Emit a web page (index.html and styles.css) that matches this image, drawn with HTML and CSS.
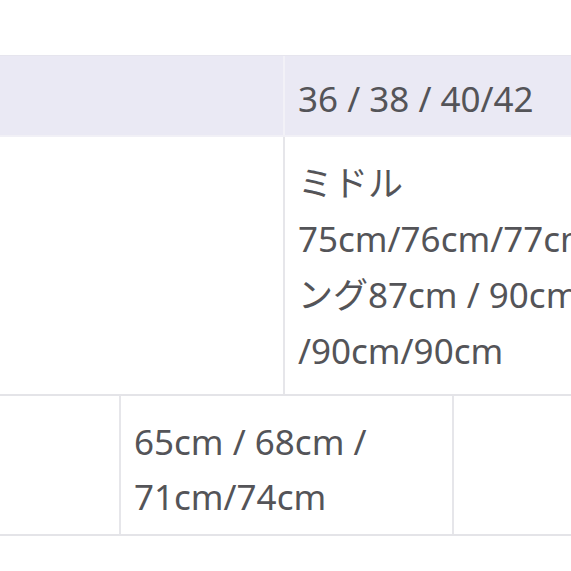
FILE: index.html
```html
<!DOCTYPE html>
<html lang="ja">
<head>
<meta charset="utf-8">
<title>サイズ表</title>
<link rel="stylesheet" href="styles.css">
</head>
<body>
<div class="sheet">
  <div class="row head">
    <div class="cell wide-left"></div>
    <div class="cell rest"><span class="line">36 / 38 / 40/42</span></div>
  </div>
  <div class="row body-a">
    <div class="cell wide-left"></div>
    <div class="cell rest">
      <span class="line">ミドル</span>
      <span class="line">75cm/76cm/77cm/78cm ロ</span>
      <span class="line">ング87cm / 90cm / 90cm</span>
      <span class="line">/90cm/90cm</span>
    </div>
  </div>
  <div class="row body-b">
    <div class="cell narrow-left"></div>
    <div class="cell mid">
      <span class="line">65cm / 68cm /</span>
      <span class="line">71cm/74cm</span>
    </div>
    <div class="cell rest"></div>
  </div>
</div>
</body>
</html>
```

FILE: styles.css
```css
html, body {
  margin: 0;
  padding: 0;
  background: #ffffff;
  overflow: hidden;
}

.sheet {
  width: 571px;
  height: 571px;
  overflow: hidden;
  padding-top: 55px;
  box-sizing: border-box;
  font-family: "Noto Sans", "Noto Sans CJK JP", sans-serif;
  font-size: 35px;
  line-height: 56px;
  color: #545458;
}

.row {
  display: flex;
  width: 900px;
  border-bottom: 2px solid #e4e4e8;
}

.head {
  background: #eae9f4;
  border-top: 1px solid #e6e5ee;
  border-bottom-color: #f1f0f6;
}

.cell {
  box-sizing: border-box;
  flex: none;
}

.line {
  display: block;
  white-space: nowrap;
}

.wide-left {
  width: 285px;
  border-right: 2px solid #e6e6ea;
}

.head .wide-left {
  border-right-color: #f2f1f7;
}

.narrow-left {
  width: 121px;
  border-right: 2px solid #e6e6ea;
}

.mid {
  width: 333px;
  border-right: 2px solid #e6e6ea;
  padding: 18px 14px 10px 13px;
  line-height: 55px;
}

.rest {
  flex: 1;
}

.head .rest {
  padding: 15px 14px 8px 13px;
}

.body-a .rest {
  padding: 18px 14px 15px 13px;
}
```
